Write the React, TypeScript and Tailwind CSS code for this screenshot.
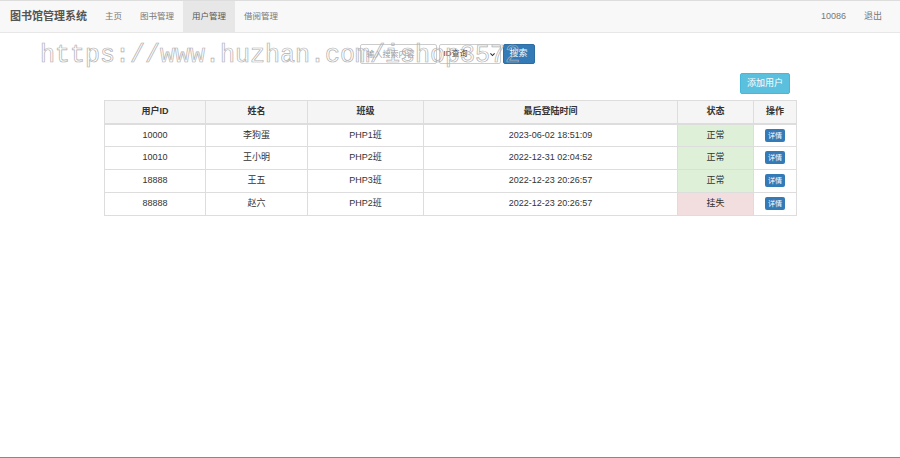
import React from "react";

interface UserRow {
  id: string;
  name: string;
  cls: string;
  lastLogin: string;
  status: string;
  ok: boolean;
}

const rows: UserRow[] = [
  { id: "10000", name: "李狗蛋", cls: "PHP1班", lastLogin: "2023-06-02 18:51:09", status: "正常", ok: true },
  { id: "10010", name: "王小明", cls: "PHP2班", lastLogin: "2022-12-31 02:04:52", status: "正常", ok: true },
  { id: "18888", name: "王五", cls: "PHP3班", lastLogin: "2022-12-23 20:26:57", status: "正常", ok: true },
  { id: "88888", name: "赵六", cls: "PHP2班", lastLogin: "2022-12-23 20:26:57", status: "挂失", ok: false },
];

const navItems = ["主页", "图书管理", "用户管理", "借阅管理"];

const App = () => {
  return (
    <div
      className="relative h-[458px] w-[900px] overflow-hidden bg-white text-[9px] text-[#333] border-b border-[#888]"
      style={{ fontFamily: '"Liberation Sans", "Noto Sans CJK SC", sans-serif' }}
    >
      {/* navbar */}
      <nav className="flex h-[33px] items-stretch border-b border-[#e7e7e7] bg-[#f8f8f8] border-t border-t-[#ddd]">
        <div className="flex items-center pl-[10px] pr-[9px] text-[11px] font-bold text-[#555]">
          图书馆管理系统
        </div>
        <ul className="flex items-stretch text-[8.5px]">
          {navItems.map((item) => (
            <li
              key={item}
              className={
                item === "用户管理"
                  ? "flex items-center bg-[#e7e7e7] px-[9px] text-[#555]"
                  : "flex items-center px-[9px] text-[#777]"
              }
            >
              {item}
            </li>
          ))}
        </ul>
        <div className="ml-auto flex items-center gap-[18px] pr-[18px] text-[#777]">
          <span>10086</span>
          <span>退出</span>
        </div>
      </nav>

      {/* search */}
      <div className="mt-[11px] flex justify-center pr-[6px]">
        <div className="flex items-center gap-[2px]">
          <input
            placeholder="输入搜索内容"
            className="h-[20px] w-[77px] rounded-[2px] border border-[#ccc] px-[6px] text-[8px] outline-none placeholder:text-[#999]"
          />
          <div className="flex h-[20px] w-[62px] items-center justify-between rounded-[2px] border border-[#ccc] px-[4px] text-[8px] text-[#333]">
            <span>ID查询</span>
            <svg width="7" height="7" viewBox="0 0 10 10" fill="none" stroke="#333" strokeWidth="1.6">
              <path d="M2 3.5l3 3 3-3" />
            </svg>
          </div>
          <button className="h-[20px] w-[32px] rounded-[2px] border border-[#2e6da4] bg-[#337ab7] text-[9px] text-white">
            搜索
          </button>
        </div>
      </div>

      {/* add button */}
      <div className="mt-[9px] flex justify-end pr-[110px]">
        <button className="h-[21px] w-[50px] rounded-[2px] border border-[#46b8da] bg-[#5bc0de] text-[9px] text-white">
          添加用户
        </button>
      </div>

      {/* table */}
      <div className="ml-[104px] mt-[6px] w-[693px]">
        <table className="w-full border-collapse border border-[#ddd] text-center">
          <thead>
            <tr className="h-[23px] bg-[#f5f5f5] font-bold text-[#333]">
              <th className="w-[101px] border border-[#ddd] border-b-2">用户ID</th>
              <th className="w-[102px] border border-[#ddd] border-b-2">姓名</th>
              <th className="w-[116px] border border-[#ddd] border-b-2">班级</th>
              <th className="w-[254px] border border-[#ddd] border-b-2">最后登陆时间</th>
              <th className="w-[76px] border border-[#ddd] border-b-2">状态</th>
              <th className="border border-[#ddd] border-b-2">操作</th>
            </tr>
          </thead>
          <tbody>
            {rows.map((row) => (
              <tr key={row.id} className="h-[23px]">
                <td className="border border-[#ddd]">{row.id}</td>
                <td className="border border-[#ddd]">{row.name}</td>
                <td className="border border-[#ddd]">{row.cls}</td>
                <td className="border border-[#ddd]">{row.lastLogin}</td>
                <td className={row.ok ? "border border-[#ddd] bg-[#dff0d8]" : "border border-[#ddd] bg-[#f2dede]"}>
                  {row.status}
                </td>
                <td className="border border-[#ddd]">
                  <button className="h-[13px] rounded-[2px] bg-[#337ab7] px-[3px] text-[7px] leading-[13px] text-white">
                    详情
                  </button>
                </td>
              </tr>
            ))}
          </tbody>
        </table>
      </div>

      {/* watermark */}
      <div
        className="pointer-events-none absolute left-[40px] top-[41px] text-[25px] leading-[30px] text-transparent"
        style={{ fontFamily: '"Liberation Mono", monospace', WebkitTextStroke: "0.7px #b0b0b0" }}
      >
        https://www.huzhan.com/ishop3572
      </div>
    </div>
  );
};

export default App;
